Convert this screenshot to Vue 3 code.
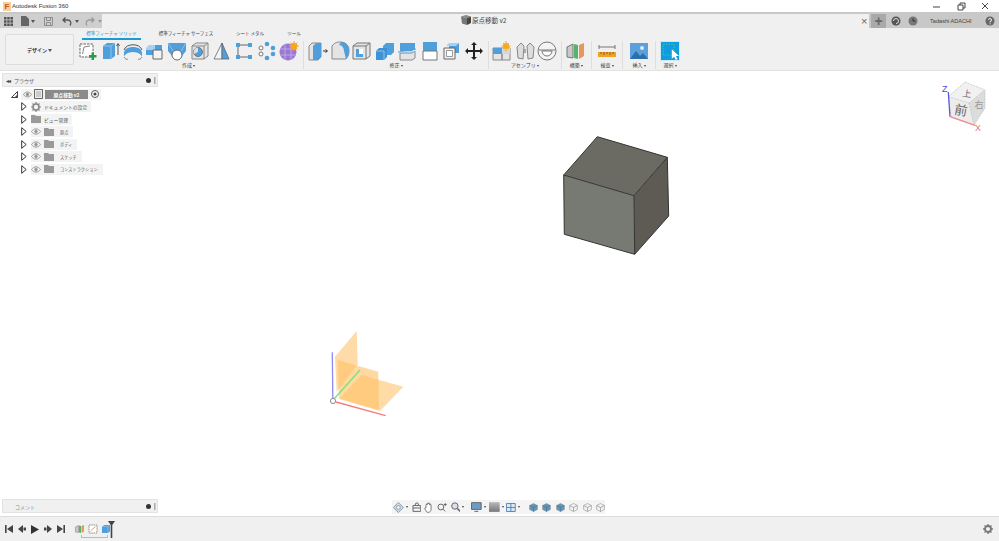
<template>
  <div class="app">
    <header class="titlebar">
      <span class="logo">F</span>
      <span class="app-name">Autodesk Fusion 360</span>
      <div class="win-controls">
        <svg width="9" height="9" viewBox="0 0 9 9"><path d="M0 5h7" stroke="#444" fill="none" /></svg>
        <svg width="9" height="9" viewBox="0 0 9 9"><path d="M1 3h5v5H1zM3 3V1h5v5H6" stroke="#444" fill="none" /></svg>
        <svg width="9" height="9" viewBox="0 0 9 9"><path d="M1 1l6 6M7 1l-6 6" stroke="#444" fill="none" /></svg>
      </div>
    </header>

    <div class="qatrow">
      <div class="qat">
        <svg class="q1" width="9" height="9" viewBox="0 0 9 9" fill="#555"><path d="M0 0h2.500v2.500H0zM3.200 0h2.500v2.500H3.200zM6.400 0H9v2.500H6.400zM0 3.200h2.500v2.500H0zM3.200 3.200h2.500v2.500H3.200zM6.400 3.200H9v2.500H6.400zM0 6.400h2.500V9H0zM3.200 6.400h2.500V9H3.200zM6.400 6.400H9V9H6.400z" /></svg>
        <svg class="q2" width="8" height="10" viewBox="0 0 8 10" fill="#666"><path d="M0 0h5l3 3v7H0z" /></svg>
        <span class="caret q2c"></span>
        <svg class="q3" width="9" height="9" viewBox="0 0 9 9" fill="none" stroke="#8d8d8d"><path d="M.5.5h8v8h-8zM2.500 .5v3h4v-3M2.500 8.500v-3h4v3" /></svg>
        <svg class="q4" width="10" height="9" viewBox="0 0 10 9" fill="none" stroke="#555" stroke-width="1.300"><path d="M1 3h5c3 0 3.500 4 2 5.500M3.500.5L1 3l2.500 2.500" /></svg>
        <span class="caret q4c"></span>
        <svg class="q5" width="10" height="9" viewBox="0 0 10 9" fill="none" stroke="#999" stroke-width="1.300"><path d="M9 3H4C1 3 .5 7 2 8.500M6.500.5L9 3 6.500 5.500" /></svg>
        <span class="caret q5c"></span>
      </div>
      <div class="doc-title">
        <svg width="10" height="10" viewBox="0 0 10 10"><path d="M0 1.500L5 0l5 1.500L6 3.200z" fill="#888" /><path d="M0 1.500l6 1.700V10L1 8.500z" fill="#777" /><path d="M6 3.200l4-1.700v6.500L6 10z" fill="#444" /></svg>
        <span>原点移動 v2</span>
      </div>
      <span class="tab-close">×</span>
      <div class="account">
        <span class="plus">+</span>
        <svg width="10" height="10" viewBox="0 0 10 10"><circle cx="5" cy="5" r="4.500" fill="#555" /><path d="M2.500 5a2.500 2.500 0 1 1 2.500 2.500" stroke="#ddd" fill="none" /></svg>
        <svg class="clock" width="10" height="10" viewBox="0 0 10 10"><circle cx="5" cy="5" r="4.500" fill="#777" /><path d="M5 2.500V5h2.200" stroke="#333" fill="none" /></svg>
        <span class="user">Tadashi ADACHI</span>
        <svg class="help" width="10" height="10" viewBox="0 0 10 10"><circle cx="5" cy="5" r="4.500" fill="#666" /><path d="M3.500 4a1.500 1.500 0 1 1 1.500 1.500V6.500M5 7.300v1" stroke="#eee" fill="none" /></svg>
      </div>
    </div>

    <section class="toolbar">
      <div class="mode-box">
        <button class="mode">デザイン <i class="caret"></i></button>
      </div>
      <div class="tool-area">
        <nav class="tabs">
          <span v-for="t in tabs" :key="t.name" class="tab" :class="{ active: t.active }" :style="{ width: t.w + 'px' }">{{ t.name }}</span>
        </nav>
        <div class="groups">
          <div v-for="g in groups" :key="g.label" class="group" :style="{ width: g.w + 'px' }">
            <div class="tools">
              <div v-for="(ic, i) in g.icons" :key="i" class="tool" :class="{ selected: g.selected }">
                <svg width="20" height="20" viewBox="0 0 20 20" v-html="ic"></svg>
              </div>
            </div>
            <div class="group-label">{{ g.label }} <i class="caret tiny"></i></div>
          </div>
        </div>
      </div>
    </section>

    <main class="canvas">
      <svg class="scene" width="999" height="445" viewBox="0 71 999 445">
        <!-- solid -->
        <polygon points="597.300,136.700 667.300,157.300 634,195.700 563.700,175" fill="#6c6b63" />
        <polygon points="563.700,175 634,195.700 634.700,254.300 564.300,234.300" fill="#777a72" />
        <polygon points="634,195.700 667.300,157.300 668.700,216 634.700,254.300" fill="#5d5b53" />
        <path d="M597.300 136.700L667.300 157.300 668.700 216 634.700 254.300 564.300 234.300 563.700 175zM563.700 175L634 195.700 667.300 157.300M634 195.700l.7 58.600" fill="none" stroke="#34342f" stroke-width="1" stroke-linejoin="round" />

        <!-- origin planes -->
        <polygon points="335,356.700 356.700,331 357.700,364.300 336.700,391.700" fill="#fdc878" fill-opacity=".65" />
        <polygon points="361.700,375 403.300,386.700 380,411 339,399" fill="#fdc778" fill-opacity=".65" />
        <polygon points="337.700,360 378.300,371.700 379,410 339,398.300" fill="#fdc064" fill-opacity=".6" />
        <line x1="334" y1="399" x2="360" y2="370" stroke="#7fe36c" stroke-width="1.300" />
        <line x1="332.300" y1="352.300" x2="332.800" y2="398" stroke="#8a8cf0" stroke-width="1.300" />
        <line x1="336" y1="402" x2="385.700" y2="415.700" stroke="#f77d7d" stroke-width="1.300" />
        <circle cx="333" cy="401" r="2.600" fill="#fff" stroke="#8d8d8d" stroke-width="1" />

        <!-- view cube -->
        <polygon points="965,82 985,90 969,103 948.300,96.700" fill="#f1f1f1" />
        <polygon points="948.300,96.700 969,103 974,125 951,116.700" fill="#ececec" />
        <polygon points="969,103 985,90 985,108 974,125" fill="#dcdcdc" />
        <path d="M965 82l20 8v18l-11 17-23-8.300-2.700-20zM948.300 96.700L969 103l16-13M969 103l5 22" fill="none" stroke="#bcbcbc" stroke-width=".7" stroke-dasharray="2 1" />
        <text x="967" y="97" class="cube-t" transform="rotate(8 967 94)">上</text>
        <text x="961" y="115" class="cube-f" transform="rotate(10 961 110)">前</text>
        <text x="979" y="108" class="cube-t side-t">右</text>
        <line x1="948.300" y1="92" x2="950" y2="116.700" stroke="#5a5ae0" stroke-width="1.300" />
        <line x1="950" y1="116.700" x2="975.700" y2="125.700" stroke="#ef8a8a" stroke-width="1.300" />
        <text x="942" y="92" class="axis z">Z</text>
        <text x="975" y="131" class="axis x">X</text>
      </svg>

      <div class="side">
        <div class="panel">
          <span class="collapse">◂◂</span>
          <span class="panel-title">ブラウザ</span>
          <span class="panel-dot"></span>
          <span class="panel-grip"></span>
        </div>
        <ul class="tree">
          <li class="root">
            <svg class="corner" width="7" height="7" viewBox="0 0 7 7"><path d="M6.500 .5v6H.5z" fill="#fff" stroke="#444" /><path d="M6.500 3.500v3H3.500z" fill="#444" /></svg>
            <div class="chip root-chip">
              <svg width="9" height="7" viewBox="0 0 10 7" fill="none" stroke="#888"><path d="M.5 3.500C3 0 7 0 9.500 3.500 7 7 3 7 .5 3.500z" /><circle cx="5" cy="3.500" r="1.300" fill="#888" /></svg>
              <svg width="9" height="10" viewBox="0 0 9 10"><path d="M.5.5h8v9h-8z" fill="#eee" stroke="#666" /><path d="M2 3h5M2 5h5M2 7h5" stroke="#aaa" /></svg>
              <span class="root-name">原点移動 v2</span>
              <svg class="root-dot" width="8" height="8" viewBox="0 0 8 8"><circle cx="4" cy="4" r="3.500" fill="#fff" stroke="#555" /><circle cx="4" cy="4" r="1.600" fill="#444" /></svg>
            </div>
          </li>
          <li v-for="row in rows" :key="row.name" class="row">
            <svg width="6" height="9" viewBox="0 0 6 9"><path d="M.7.7l4.500 3.800-4.500 3.800z" fill="#fff" stroke="#333" /></svg>
            <div class="chip">
              <svg v-if="row.eye" width="10" height="7" viewBox="0 0 10 7" fill="none" stroke="#999"><path d="M.5 3.500C3 0 7 0 9.500 3.500 7 7 3 7 .5 3.500z" /><circle cx="5" cy="3.500" r="1.300" fill="#999" /></svg>
              <svg v-if="row.gear" width="10" height="10" viewBox="0 0 10 10"><circle cx="5" cy="5" r="3" fill="none" stroke="#888" stroke-width="1.600" /><path d="M5 0v2M5 8v2M0 5h2M8 5h2M1.500 1.500l1.400 1.400M7.100 7.100l1.400 1.400M8.500 1.500L7.100 2.900M2.900 7.100L1.500 8.500" stroke="#888" stroke-width="1.200" /></svg>
              <svg v-else width="10" height="8" viewBox="0 0 10 8"><path d="M0 0h4l1 1h5v7H0z" fill="#9a9a9a" /></svg>
              <span class="row-name" :class="{ wide: row.eye }">{{ row.name }}</span>
            </div>
          </li>
        </ul>
        <div class="panel comment">
          <span class="panel-title light">コメント</span>
          <span class="panel-dot"></span>
          <span class="panel-grip"></span>
        </div>
      </div>

      <div class="navbar">
        <svg width="11" height="11" viewBox="0 0 11 11"><path d="M5.500.3L10.700 5.500 5.500 10.700.3 5.500z" fill="#cfdce6" stroke="#678" stroke-width=".7" /><circle cx="5.500" cy="5.500" r="2" fill="#f2f2f2" stroke="#678" stroke-width=".6" /></svg>
        <i class="caret tiny nav-c"></i>
        <svg class="n2" width="10" height="10" viewBox="0 0 10 10" fill="none" stroke="#666"><path d="M1 3.500h8v6H1zM3 3.500L4 1h2l1 2.500M1 6h8" /></svg>
        <svg class="n3" width="10" height="11" viewBox="0 0 10 11" fill="#fff" stroke="#555" stroke-width=".8"><path d="M2 6V3c0-1 1.300-1 1.300 0V1.600c0-1 1.300-1 1.300 0v-.1c0-1 1.300-1 1.300 0V3c0-1 1.400-1 1.400 0v4c0 2-1 3.500-3 3.500S2.500 9.500 1 7c-.5-1 .5-1.500 1-1z" /></svg>
        <svg class="n4" width="11" height="10" viewBox="0 0 11 10" fill="none" stroke="#666"><circle cx="4" cy="5" r="3" /><path d="M6.200 7.200L8.500 9.500M8.500 1v3M7 2.500h3" /></svg>
        <svg class="n5" width="10" height="10" viewBox="0 0 10 10" fill="#dde" stroke="#666"><circle cx="4" cy="4" r="3.300" /><path d="M6.500 6.500L9.500 9.500" stroke-width="1.500" /></svg>
        <i class="caret tiny nav-c"></i>
        <svg class="n6" width="11" height="10" viewBox="0 0 11 10"><path d="M.5.5h10v7H.5z" fill="#6f9cc4" stroke="#666" /><path d="M3.500 9.500h4" stroke="#666" /></svg>
        <i class="caret tiny nav-c"></i>
        <svg class="n7" width="11" height="10" viewBox="0 0 11 10"><defs><linearGradient id="gr" x1="0" y1="0" x2="0" y2="1"><stop offset="0" stop-color="#b9b9b9" /><stop offset="1" stop-color="#777" /></linearGradient></defs><rect width="11" height="10" fill="url(#gr)" /></svg>
        <i class="caret tiny nav-c"></i>
        <svg class="n8" width="10" height="9" viewBox="0 0 11 10"><path d="M.5.5h10v9H.5zM.5 5h10M5.500.5v9" fill="#dce8f4" stroke="#4a7db5" /></svg>
        <i class="caret tiny nav-c"></i>
        <svg v-for="(v, i) in viewIcons" :key="i" class="vi" :class="{ first: i === 0 }" width="9" height="9" viewBox="0 0 10 10">
          <polygon points="5,.5 9.300,2.800 9.300,7.300 5,9.500 .7,7.300 .7,2.800" :fill="v.fill" stroke="#888" stroke-width=".6" />
          <path d="M5 5V9.500M5 5L.7 2.800M5 5l4.300-2.200" fill="none" :stroke="v.line" stroke-width=".7" />
        </svg>
      </div>
    </main>

    <footer class="timeline">
      <div class="transport">
        <svg width="8" height="8" viewBox="0 0 8 8" fill="#444"><path d="M0 0h1.600v8H0zM8 0v8L2 4z" /></svg>
        <svg width="8" height="8" viewBox="0 0 8 8" fill="#444"><path d="M5 0v8L0 4zM5.500 2.500h2.500v3H5.500z" /></svg>
        <svg width="8" height="9" viewBox="0 0 8 9" fill="#333"><path d="M0 0l8 4.500L0 9z" /></svg>
        <svg width="8" height="8" viewBox="0 0 8 8" fill="#444"><path d="M3 0v8l5-4zM0 2.500h2.500v3H0z" /></svg>
        <svg width="8" height="8" viewBox="0 0 8 8" fill="#444"><path d="M8 0H6.400v8H8zM0 0v8l6-4z" /></svg>
      </div>
      <div class="steps">
        <svg width="10" height="10" viewBox="0 0 20 20" v-html="buildIcon"></svg>
        <svg width="10" height="10" viewBox="0 0 20 20"><path d="M2 2h16v16H2z" fill="#fff" stroke="#6b6b6b" stroke-width="1.500" stroke-dasharray="3 1.500" /><path d="M5 14L15 5" stroke="#e8a53a" stroke-width="2" /></svg>
        <svg width="10" height="10" viewBox="0 0 20 20"><path d="M2 5l5-3h11v13l-4 3H2z" fill="#4f9fdc" /><path d="M14 5h-12M14 5v13M14 5l4-3" stroke="#a7cdef" fill="none" /></svg>
        <span class="bracket"></span>
        <svg class="marker" width="7" height="17" viewBox="0 0 7 17"><path d="M0 0h7L4.300 4v13H2.700V4z" fill="#444" /></svg>
      </div>
      <svg class="gear" width="10" height="10" viewBox="0 0 10 10"><circle cx="5" cy="5" r="3" fill="none" stroke="#777" stroke-width="1.800" /><path d="M5 0v2M5 8v2M0 5h2M8 5h2M1.500 1.500l1.400 1.400M7.100 7.100l1.400 1.400M8.500 1.500L7.100 2.900M2.900 7.100L1.500 8.500" stroke="#777" stroke-width="1.300" /></svg>
    </footer>
  </div>
</template>

<script setup>
const B = '#4f9fdc'
const L = '#a9d0f0'
const G = '#e4e4e4'
const S = '#777'

const tabs = [
  { name: '標準フィーチャ ソリッド', w: 59, active: true },
  { name: '標準フィーチャ サーフェス', w: 90 },
  { name: 'シート メタル', w: 38 },
  { name: 'ツール', w: 50 }
]

const buildIcon = `<path d="M1 6l6-3v14l-6-1z" fill="#c9c9c9" stroke="${S}"/><path d="M8 3l4 1v14l-4-1z" fill="#58b368"/><path d="M13 4l5-2v13l-5 3z" fill="#e8975a"/>`

const groups = [
  {
    label: '作成',
    w: 230,
    icons: [
      `<path d="M2 3h13v13H2z" fill="#fff" stroke="#666" stroke-dasharray="2.500 1"/><path d="M4.500 13L6 6l6-1" fill="none" stroke="#888"/><path d="M13.500 11.500h2.500v2.500h2.500v2.500H16V19h-2.500v-2.500H11V14h2.500z" fill="#23a045"/>`,
      `<path d="M3 5l4-3h8v13l-4 3H3z" fill="${B}"/><path d="M3 5h8v13" fill="none" stroke="#8fc2ea"/><path d="M11 5l4-3" stroke="#8fc2ea"/><path d="M18 14V3M16.500 5L18 2.500 19.500 5" fill="none" stroke="#555"/>`,
      `<path d="M1 12c0-8 18-8 18 0v4c0-2-4-5-9-5s-9 3-9 5z" fill="${B}"/><path d="M1 9c2-7 16-7 18 0" fill="none" stroke="#555"/><path d="M1 16c1 2 3 3 4 2M19 16c-1 2-3 3-4 2" fill="none" stroke="#888"/>`,
      `<path d="M1 7l3-3h8v5H1z" fill="${L}"/><path d="M1 9h7v5H1zM10 4h7v5h-7z" fill="${B}"/><path d="M8 9h9v9H8z" fill="#f4f4f4" stroke="#666"/>`,
      `<path d="M1 2h18v8l-5 6H6l-5-6z" fill="${B}"/><circle cx="10" cy="14" r="5" fill="#fff" stroke="#666"/><path d="M1 2l5 8M19 2l-5 8" stroke="#8fc2ea"/>`,
      `<path d="M2 5l4-3h12v13l-4 3H2z" fill="${G}" stroke="#888"/><path d="M2 5h12v13M14 5l4-3" fill="none" stroke="#888"/><circle cx="8" cy="11" r="4.500" fill="${B}" stroke="#777"/><path d="M8 11V6.500A4.500 4.500 0 0 0 4 13z" fill="#ddd"/>`,
      `<path d="M10 2L2 18h8z" fill="#f4f4f4" stroke="#666" stroke-width=".8"/><path d="M10 2l7 16h-7z" fill="${B}" stroke="#666" stroke-width=".8"/>`,
      `<path d="M4 4h12M4 16h12M4 4v12" fill="none" stroke="#666"/><path d="M2 2h4v4H2zM14 2h4v4h-4zM2 14h4v4H2zM14 14h4v4h-4z" fill="${B}"/>`,
      `<g fill="${B}"><circle cx="10" cy="3" r="2.300"/><circle cx="16" cy="7" r="2.300"/><circle cx="16" cy="13" r="2.300"/><circle cx="10" cy="17" r="2.300"/></g><g fill="#fff" stroke="#777"><circle cx="4" cy="7" r="2"/><circle cx="4" cy="13" r="2"/></g>`,
      `<circle cx="9" cy="11" r="8.500" fill="#9a78d2"/><path d="M1 8h16M1 14h16M6 3v16M12 3v16" stroke="#c0a8e6"/><circle cx="15" cy="5" r="3.300" fill="#f5a81c"/><path d="M15 0v10M10 5h10M11.500 1.500l7 7M18.500 1.500l-7 7" stroke="#f5a81c"/>`
    ]
  },
  {
    label: '修正',
    w: 185,
    icons: [
      `<path d="M1 5l3-3h9v14l-3 3H1z" fill="${G}" stroke="#888"/><path d="M5 5l3-3h5v14l-3 3H5z" fill="${B}"/><path d="M15 10h4M17.500 8.500L19.500 10l-2 1.500" stroke="#333" fill="none"/>`,
      `<path d="M2 5c3-4 6-4 9-4a8 8 0 0 1 8 9c0 3-1 6-3 8H2z" fill="${G}" stroke="#888"/><path d="M11 1a8 8 0 0 1 8 9c0 3-1 6-3 8l-2-8c0-3-2-6-5-6z" fill="${B}"/>`,
      `<path d="M1 5l4-3h13v13l-4 3H1z" fill="${G}" stroke="#777"/><path d="M1 5h13v13M14 5l4-3" fill="none" stroke="#777"/><path d="M4 8h3v5h4v3H4z" fill="${B}"/><path d="M7 8h4v5H7z" fill="#fff"/>`,
      `<path d="M8 5l3-3h8v9l-3 3H8z" fill="${B}"/><path d="M1 10l3-3h8v9l-3 3H1z" fill="#3f92d6"/><path d="M1 10h8v9" fill="none" stroke="#8fc2ea"/>`,
      `<path d="M3 2h15v6l-3 2H3z" fill="${B}"/><path d="M1 11l18-3" stroke="${B}"/><path d="M3 12h12l3-2v7l-3 2H3z" fill="${G}" stroke="#888"/><path d="M1 11h17" stroke="#8fc2ea"/>`,
      `<path d="M3 1h14v9H3z" fill="${B}"/><path d="M3 10h14v9H3z" fill="#fff" stroke="#777"/>`,
      `<path d="M7 2h10v10H7z" fill="${B}"/><path d="M7 2l-3 3h10l3-3" fill="${L}"/><path d="M2 7h11v11H2z" fill="#f4f4f4" stroke="#666"/><path d="M4.500 9.500h6v6h-6z" fill="#fff" stroke="#999"/>`,
      `<path d="M10 1l3 3h-2v5h5V7l3 3-3 3v-2h-5v5h2l-3 3-3-3h2v-5H4v2l-3-3 3-3v2h5V4H7z" fill="#222"/>`
    ]
  },
  {
    label: 'アセンブリ',
    w: 72.7,
    icons: [
      `<path d="M1 7h9v12H1zM10 7h8v12h-8z" fill="${G}" stroke="#888"/><path d="M1 7h9v6H1z" fill="${B}"/><path d="M10 7h8v6h-8z" fill="#d6d6d6"/><circle cx="14" cy="5" r="3" fill="#f5a81c"/><path d="M14 0v10M9.500 5h9M11 2l6 6M17 2l-6 6" stroke="#f5a81c"/>`,
      `<path d="M2 6l4-4 3 3-1 13-5-1zM12 5l3-3 4 4-1 11-5 1z" fill="#ddd" stroke="#888"/><path d="M9 8h2v4H9z" fill="#aaa"/>`,
      `<circle cx="10" cy="10" r="9" fill="#f4f4f4" stroke="#777"/><path d="M2 9h16" stroke="#777"/><path d="M5 10a5 5 0 0 0 10 0z" fill="#fff" stroke="#777"/>`
    ]
  },
  { label: '構築', w: 30.3, icons: [buildIcon] },
  {
    label: '検査',
    w: 31,
    icons: [
      `<path d="M2 6h16M2 4v4M18 4v4" stroke="#777" fill="none"/><path d="M1 11h18v5H1z" fill="#eda32b"/><path d="M4 11v2M7 11v3M10 11v2M13 11v3M16 11v2" stroke="#8a5d12"/>`
    ]
  },
  {
    label: '挿入',
    w: 33,
    icons: [
      `<path d="M1 2h18v16H1z" fill="#5c9fdc"/><path d="M1 18l6-8 4 5 3-3 5 6z" fill="#2c6fae"/><circle cx="13" cy="7" r="2" fill="#d8ecfb"/>`
    ]
  },
  {
    label: '選択',
    w: 28,
    selected: true,
    icons: [
      `<path d="M2.500 2.500h12v12h-12z" fill="none" stroke="#4fc88c" stroke-dasharray="1.500 1.500"/><path d="M12 8l0 11 2.500-2.500 2 3.500 2-1-2-3.500H20z" fill="#fff"/>`
    ]
  }
]

const rows = [
  { name: 'ドキュメントの設定', gear: true },
  { name: 'ビュー管理' },
  { name: '原点', eye: true },
  { name: 'ボディ', eye: true },
  { name: 'スケッチ', eye: true },
  { name: 'コンストラクション', eye: true }
]

const viewIcons = [
  { fill: '#5f97b8', line: '#3f7696' },
  { fill: '#5f97b8', line: '#3f7696' },
  { fill: '#5f97b8', line: '#3f7696' },
  { fill: '#f2f2f2', line: '#888' },
  { fill: '#f2f2f2', line: '#888' },
  { fill: '#f2f2f2', line: '#888' }
]
</script>

<style>
html, body { margin: 0; background: #fff; }
</style>

<style scoped>
.app {
  width: 999px;
  height: 541px;
  display: flex;
  flex-direction: column;
  overflow: hidden;
  background: #fff;
  color: #3a3a3a;
  font-family: "Noto Sans CJK JP", "Liberation Sans", sans-serif;
  font-size: 5px;
}

.caret {
  display: inline-block;
  width: 0;
  height: 0;
  border-left: 2px solid transparent;
  border-right: 2px solid transparent;
  border-top: 3px solid #555;
  vertical-align: middle;
}

.caret.tiny {
  border-left-width: 1.500px;
  border-right-width: 1.500px;
  border-top-width: 2px;
  border-top-color: #444;
}

.titlebar {
  height: 12px;
  display: flex;
  align-items: center;
  padding-left: 3px;
  flex-shrink: 0;
}

.logo {
  width: 8px;
  height: 9px;
  background: #f6cfa0;
  color: #c7560f;
  font: bold 8px/9px "Liberation Sans", sans-serif;
  text-align: center;
  margin-right: 1px;
}

.app-name {
  font: 6px "Liberation Sans", sans-serif;
  color: #333;
}

.win-controls {
  margin-left: auto;
  display: flex;
  gap: 15px;
  padding-right: 9px;
}

.qatrow {
  height: 14px;
  border-top: 2px solid #c8c8c8;
  background: #f0f0f0;
  display: flex;
  align-items: stretch;
  position: relative;
  flex-shrink: 0;
}

.qat {
  width: 102px;
  background: #cfcfcf;
  display: flex;
  align-items: center;
  padding-left: 4px;
  box-sizing: border-box;
}

.q2 { margin-left: 8px; }
.q2c { margin-left: 2px; }
.q3 { margin-left: 9px; }
.q4 { margin-left: 9px; }
.q4c { margin-left: 3px; }
.q5 { margin-left: 6px; }
.q5c { margin-left: 3px; border-top-color: #999; }

.doc-title {
  position: absolute;
  left: 461px;
  top: 1px;
  display: flex;
  align-items: center;
  gap: 1px;
  font-size: 6.500px;
  color: #444;
}

.tab-close {
  position: absolute;
  left: 861px;
  top: 0;
  font: 11px/14px "Liberation Sans", sans-serif;
  color: #666;
}

.account {
  margin-left: auto;
  width: 130px;
  background: #c8c8c8;
  display: flex;
  align-items: center;
  box-sizing: border-box;
  padding-left: 2px;
}

.plus {
  width: 15px;
  height: 100%;
  background: #a9a9a9;
  color: #666;
  font: bold 14px/14px "Liberation Sans", sans-serif;
  text-align: center;
  margin-right: 5px;
}

.clock { margin-left: 7px; }

.user {
  margin-left: 12px;
  font: 5.600px "Liberation Sans", sans-serif;
  color: #444;
  white-space: nowrap;
}

.help { margin-left: 13px; flex-shrink: 0; }

.toolbar {
  height: 42px;
  background: #f0f0f0;
  border-bottom: 1px solid #e2e2e2;
  display: flex;
  flex-shrink: 0;
  box-sizing: content-box;
}

.mode-box {
  width: 74px;
  padding: 6px 0 0 5px;
  box-sizing: border-box;
}

.mode {
  width: 69px;
  height: 31px;
  background: #f2f2f2;
  border: 1px solid #dcdcdc;
  border-radius: 2px;
  font: inherit;
  font-weight: 700;
  color: #333;
  padding: 0;
}

.tool-area {
  display: flex;
  flex-direction: column;
}

.tabs {
  height: 13px;
  padding: 2px 0 0 8px;
  display: flex;
  box-sizing: border-box;
}

.tab {
  height: 10px;
  line-height: 7px;
  text-align: center;
  white-space: nowrap;
  font-size: 4.500px;
  flex-shrink: 0;
}

.tab.active {
  color: #1b9ad6;
  border-bottom: 2px solid #1b9ad6;
  box-sizing: border-box;
}

.groups {
  display: flex;
  height: 29px;
}

.group {
  display: flex;
  flex-direction: column;
  align-items: center;
  border-right: 1px solid #dedede;
  box-sizing: border-box;
  height: 28px;
}

.group:last-child { border-right: none; }

.tools {
  display: flex;
  justify-content: center;
  height: 21px;
}

.tool {
  width: 22.400px;
  display: flex;
  justify-content: center;
  align-items: center;
}

.tool.selected {
  width: 20px;
  height: 20px;
  background: #0f9ddf;
  border: 1px solid #cbe9f7;
  box-sizing: border-box;
}

.group-label {
  font-size: 5px;
  line-height: 8px;
  white-space: nowrap;
}

.canvas {
  flex: 1;
  position: relative;
  min-height: 0;
}

.scene {
  position: absolute;
  left: 0;
  top: 0;
}

.cube-t { font-size: 9px; fill: #666; font-family: "Noto Sans CJK JP", sans-serif; text-anchor: middle; }
.cube-f { font-size: 13px; fill: #666; font-family: "Noto Sans CJK JP", sans-serif; text-anchor: middle; }
.side-t { fill: #999; }
.axis { font: 9px "Liberation Sans", sans-serif; }
.axis.z { fill: #4a4ae0; }
.axis.x { fill: #e87575; }

.side {
  position: absolute;
  left: 2px;
  top: 2px;
  bottom: 3px;
  width: 156px;
  display: flex;
  flex-direction: column;
}

.panel {
  height: 14px;
  background: #f0f0f0;
  border: 1px solid #e2e2e2;
  box-sizing: border-box;
  display: flex;
  align-items: center;
  padding-left: 3px;
  flex-shrink: 0;
}

.collapse { font-size: 6px; color: #444; letter-spacing: -1.500px; margin-right: 5px; }
.panel-title { font-size: 5px; color: #555; }
.panel-title.light { color: #888; margin-left: 9px; }

.panel-dot {
  margin-left: auto;
  width: 5px;
  height: 5px;
  border-radius: 50%;
  background: #333;
}

.panel-grip {
  width: 0;
  height: 7px;
  border-left: 1px solid #aaa;
  border-right: 1px solid #ccc;
  margin: 0 1px 0 3px;
}

.tree {
  list-style: none;
  margin: 1px 0 0;
  padding: 0 0 0 9px;
  flex: 1;
  font-size: 4.800px;
}

.tree li {
  height: 12.500px;
  display: flex;
  align-items: center;
}

.root .corner { margin-right: 3px; }

.chip {
  background: #f3f3f3;
  height: 11px;
  display: flex;
  align-items: center;
  gap: 3px;
}

.root-chip { padding: 0 2px; gap: 2px; }

.root-name {
  background: #8a8a8a;
  color: #fff;
  height: 9px;
  line-height: 9px;
  width: 43px;
  text-align: center;
  font-weight: 700;
  white-space: nowrap;
}

.root-dot { margin-left: 1px; }

.row { padding-left: 10px; gap: 4px; }
.row-name { margin: 0 4px 0 0; color: #555; white-space: nowrap; }
.row-name.wide { margin: 0 5px 0 3px; font-size: 4.200px; }

.navbar {
  position: absolute;
  left: 392px;
  bottom: 2px;
  width: 213px;
  height: 14px;
  background: #f4f4f4;
  display: flex;
  align-items: center;
  padding-left: 1px;
  box-sizing: border-box;
}

.nav-c { margin-left: 2px; }
.n2 { margin-left: 4px; }
.n3 { margin-left: 3px; }
.n4 { margin-left: 3px; }
.n5 { margin-left: 3px; }
.n6 { margin-left: 7px; }
.n7 { margin-left: 3px; }
.n8 { margin-left: 2px; }
.vi { margin-left: 4.500px; flex-shrink: 0; }
.vi.first { margin-left: 9px; }

.timeline {
  height: 25px;
  border-top: 1px solid #dcdcdc;
  background: #f0f0f0;
  display: flex;
  align-items: center;
  flex-shrink: 0;
  box-sizing: border-box;
}

.transport {
  display: flex;
  align-items: center;
  gap: 5px;
  padding-left: 5px;
}

.steps {
  margin-left: 10px;
  display: flex;
  gap: 3px;
  position: relative;
  align-items: center;
}

.bracket {
  position: absolute;
  left: 6px;
  top: 14px;
  width: 25px;
  height: 2px;
  border: 1px solid #bbb;
  border-top: none;
}

.marker {
  margin-left: -6px;
}

.gear {
  margin-left: auto;
  margin-right: 6px;
}
</style>
